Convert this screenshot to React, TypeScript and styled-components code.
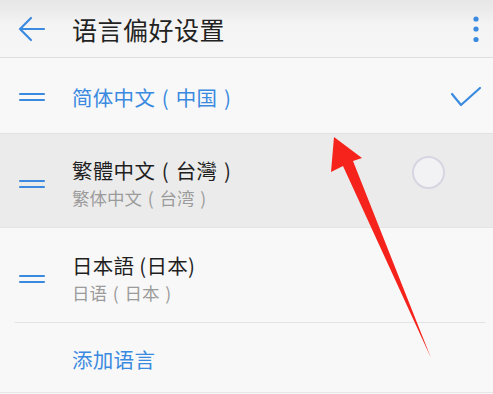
import React from "react";
import styled, { createGlobalStyle } from "styled-components";

const Global = createGlobalStyle`
  html, body { margin: 0; padding: 0; background: #f7f7f7; }
  body { font-family: "Noto Sans CJK SC", "Noto Sans", sans-serif; }
`;

const Screen = styled.div`
  position: relative;
  width: 493px;
  height: 394px;
  overflow: hidden;
  background: #f8f8f8;
  display: flex;
  flex-direction: column;
`;

const Header = styled.header`
  height: 57px;
  flex: none;
  display: flex;
  align-items: center;
  padding: 0 12px 0 18px;
  background: linear-gradient(#e6e6e6, #f4f4f4 45%, #f6f6f6);
  border-bottom: 1px solid #dedede;
`;

const Title = styled.h1`
  margin: 0 0 0 26px;
  flex: 1;
  font-size: 25px;
  font-weight: 400;
  color: #222;
  line-height: 30px;
  letter-spacing: 0.5px;
`;

const IconBtn = styled.div`
  display: flex;
  align-items: center;
  justify-content: center;
`;

const Row = styled.div<{ $h: number; $hl?: boolean; $shift?: number }>`
  height: ${(p) => p.$h}px;
  flex: none;
  display: flex;
  align-items: center;
  padding: ${(p) => (p.$shift || 0)}px 11px 0 19px;
  box-sizing: border-box;
  background: ${(p) => (p.$hl ? "#ebebeb" : "transparent")};
  box-shadow: ${(p) => (p.$hl ? "inset 0 1px 0 #e2e2e2, inset 0 -1px 0 #e4e4e4" : "none")};
`;

const Handle = styled.div`
  width: 26px;
  height: 8px;
  margin-right: 27px;
  display: flex;
  flex-direction: column;
  justify-content: space-between;
  flex: none;
  & > span {
    display: block;
    height: 2px;
    border-radius: 1px;
    background: #3a8ae0;
  }
`;

const TextCol = styled.div`
  flex: 1;
  display: flex;
  flex-direction: column;
`;

const Name = styled.div<{ $blue?: boolean }>`
  font-size: 20.5px;
  line-height: 28px;
  color: ${(p) => (p.$blue ? "#3a8ae0" : "#1f1f1f")};
  letter-spacing: 0.3px;
  white-space: nowrap;
`;

const Sub = styled.div`
  font-size: 17.5px;
  line-height: 28px;
  color: #9b9b9b;
  white-space: nowrap;
`;

const Punct = styled.span`
  display: inline-block;
  width: 1em;
  text-align: center;
`;

const Divider = styled.div`
  height: 1px;
  margin: 0 8px 0 15px;
  background: #e3e3e3;
  flex: none;
`;

const AddRow = styled.div`
  height: 70px;
  flex: none;
  display: flex;
  align-items: center;
  padding: 2px 0 0 72px;
  box-sizing: border-box;
  font-size: 20.5px;
  color: #3a8ae0;
  letter-spacing: 0.3px;
  border-bottom: 1px solid #e6e6e6;
`;

const Radio = styled.div`
  width: 29px;
  height: 29px;
  border-radius: 50%;
  border: 2px solid #d6d6e2;
  background: #f2f2f5;
  margin: 0 37px 23px 0;
  flex: none;
`;

const Overlay = styled.svg`
  position: absolute;
  left: 0;
  top: 0;
  pointer-events: none;
`;

const BLUE = "#3a8ae0";

function Cjk({ text }: { text: string }) {
  const parts = text.split(/([（）])/);
  return (
    <>
      {parts.map((p, i) =>
        p === "（" ? <Punct key={i}>(</Punct> : p === "）" ? <Punct key={i}>)</Punct> : <React.Fragment key={i}>{p}</React.Fragment>
      )}
    </>
  );
}

export default function App() {
  return (
    <Screen>
      <Global />
      <Header>
        <IconBtn>
          <svg width="28" height="26" viewBox="0 0 28 26">
            <path d="M26 13H3M13 2L2 13l11 11" fill="none" stroke={BLUE} strokeWidth="2.2" strokeLinecap="round" strokeLinejoin="round" />
          </svg>
        </IconBtn>
        <Title>语言偏好设置</Title>
        <IconBtn>
          <svg width="10" height="28" viewBox="0 0 10 28">
            <circle cx="5" cy="4" r="2.6" fill={BLUE} />
            <circle cx="5" cy="14" r="2.6" fill={BLUE} />
            <circle cx="5" cy="24.5" r="2.6" fill={BLUE} />
          </svg>
        </IconBtn>
      </Header>

      <Row $h={75} $shift={3}>
        <Handle><span /><span /></Handle>
        <TextCol>
          <Name $blue><Cjk text="简体中文（中国）" /></Name>
        </TextCol>
        <svg width="32" height="22" viewBox="0 0 32 22">
          <path d="M2 8l9 11L30 2" fill="none" stroke={BLUE} strokeWidth="2.2" strokeLinecap="round" strokeLinejoin="round" />
        </svg>
      </Row>

      <Row $h={95} $hl $shift={7}>
        <Handle><span /><span /></Handle>
        <TextCol>
          <Name><Cjk text="繁體中文（台灣）" /></Name>
          <Sub><Cjk text="繁体中文（台湾）" /></Sub>
        </TextCol>
        <Radio />
      </Row>

      <Row $h={94} $shift={7}>
        <Handle><span /><span /></Handle>
        <TextCol>
          <Name>日本語 (日本)</Name>
          <Sub><Cjk text="日语（日本）" /></Sub>
        </TextCol>
      </Row>

      <Divider />

      <AddRow>添加语言</AddRow>

      <Overlay width="493" height="394" viewBox="0 0 493 394">
        <polygon points="334,137 362,158 353,161 431,358 343,166 331,172" fill="#f5231c" />
      </Overlay>
    </Screen>
  );
}
